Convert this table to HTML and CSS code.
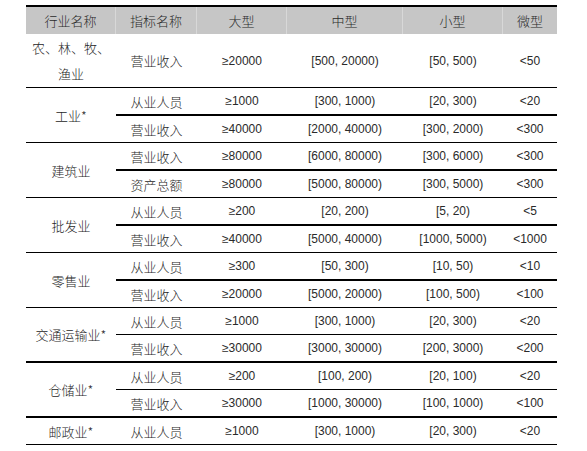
FILE: index.html
```html
<!DOCTYPE html>
<html lang="zh-CN">
<head>
<meta charset="utf-8">
<title>统计上大中小微型企业划分标准</title>
<link rel="stylesheet" href="styles.css">
</head>
<body>
<div class="sheet">
  <div class="head">
    <div class="hc">行业名称</div>
    <div class="hc">指标名称</div>
    <div class="hc">大型</div>
    <div class="hc">中型</div>
    <div class="hc">小型</div>
    <div class="hc last">微型</div>
  </div>

  <div class="group tall">
    <div class="industry">农、林、牧、<br>渔业</div>
    <div class="metrics">
      <div class="row fill"><div class="c cn">营业收入</div><div class="c num">≥20000</div><div class="c num">[500, 20000)</div><div class="c num">[50, 500)</div><div class="c num">&lt;50</div></div>
    </div>
  </div>

  <div class="group">
    <div class="industry">工业*</div>
    <div class="metrics">
      <div class="row thick"><div class="c cn">从业人员</div><div class="c num">≥1000</div><div class="c num">[300, 1000)</div><div class="c num">[20, 300)</div><div class="c num">&lt;20</div></div>
      <div class="row"><div class="c cn">营业收入</div><div class="c num">≥40000</div><div class="c num">[2000, 40000)</div><div class="c num">[300, 2000)</div><div class="c num">&lt;300</div></div>
    </div>
  </div>

  <div class="group">
    <div class="industry">建筑业</div>
    <div class="metrics">
      <div class="row thick"><div class="c cn">营业收入</div><div class="c num">≥80000</div><div class="c num">[6000, 80000)</div><div class="c num">[300, 6000)</div><div class="c num">&lt;300</div></div>
      <div class="row"><div class="c cn">资产总额</div><div class="c num">≥80000</div><div class="c num">[5000, 80000)</div><div class="c num">[300, 5000)</div><div class="c num">&lt;300</div></div>
    </div>
  </div>

  <div class="group">
    <div class="industry">批发业</div>
    <div class="metrics">
      <div class="row thick"><div class="c cn">从业人员</div><div class="c num">≥200</div><div class="c num">[20, 200)</div><div class="c num">[5, 20)</div><div class="c num">&lt;5</div></div>
      <div class="row"><div class="c cn">营业收入</div><div class="c num">≥40000</div><div class="c num">[5000, 40000)</div><div class="c num">[1000, 5000)</div><div class="c num">&lt;1000</div></div>
    </div>
  </div>

  <div class="group">
    <div class="industry">零售业</div>
    <div class="metrics">
      <div class="row thick"><div class="c cn">从业人员</div><div class="c num">≥300</div><div class="c num">[50, 300)</div><div class="c num">[10, 50)</div><div class="c num">&lt;10</div></div>
      <div class="row"><div class="c cn">营业收入</div><div class="c num">≥20000</div><div class="c num">[5000, 20000)</div><div class="c num">[100, 500)</div><div class="c num">&lt;100</div></div>
    </div>
  </div>

  <div class="group heavy">
    <div class="industry">交通运输业*</div>
    <div class="metrics">
      <div class="row"><div class="c cn">从业人员</div><div class="c num">≥1000</div><div class="c num">[300, 1000)</div><div class="c num">[20, 300)</div><div class="c num">&lt;20</div></div>
      <div class="row"><div class="c cn">营业收入</div><div class="c num">≥30000</div><div class="c num">[3000, 30000)</div><div class="c num">[200, 3000)</div><div class="c num">&lt;200</div></div>
    </div>
  </div>

  <div class="group heavy">
    <div class="industry">仓储业*</div>
    <div class="metrics">
      <div class="row"><div class="c cn">从业人员</div><div class="c num">≥200</div><div class="c num">[100, 200)</div><div class="c num">[20, 100)</div><div class="c num">&lt;20</div></div>
      <div class="row"><div class="c cn">营业收入</div><div class="c num">≥30000</div><div class="c num">[1000, 30000)</div><div class="c num">[100, 1000)</div><div class="c num">&lt;100</div></div>
    </div>
  </div>

  <div class="group">
    <div class="industry">邮政业*</div>
    <div class="metrics">
      <div class="row"><div class="c cn">从业人员</div><div class="c num">≥1000</div><div class="c num">[300, 1000)</div><div class="c num">[20, 300)</div><div class="c num">&lt;20</div></div>
    </div>
  </div>
</div>
</body>
</html>
```

FILE: styles.css
```css
* {
  box-sizing: border-box;
}

body {
  margin: 0;
  background: #ffffff;
  color: #262626;
  font-family: "Noto Sans CJK SC", sans-serif;
  font-size: 13px;
  font-weight: 300;
}

.sheet {
  margin: 5px 0 0 26px;
  width: 531px;
  border-top: 2px solid #000000;
}

.head {
  display: grid;
  grid-template-columns: 90px 81px 90px 116px 100px 54px;
  height: 27px;
  background: #c6c6c6;
}

.hc {
  display: flex;
  align-items: center;
  justify-content: center;
  border-right: 1px solid #d8d8d8;
  color: #2a2a2a;
}

.hc.last {
  border-right: none;
}

.group {
  display: grid;
  grid-template-columns: 90px 441px;
  border-bottom: 1px solid #000000;
}

.group.heavy {
  border-bottom: 2px solid #000000;
}

.industry {
  display: flex;
  align-items: center;
  justify-content: center;
  text-align: center;
}

.group.tall .industry {
  line-height: 26px;
}

.metrics {
  display: flex;
  flex-direction: column;
}

.row {
  display: grid;
  grid-template-columns: 81px 90px 116px 100px 54px;
  height: 26px;
}

.row.fill {
  height: 53px;
}

.row.thick {
  height: 28px;
  border-bottom: 2px solid #000000;
}

.group.heavy .row:first-child {
  height: 27px;
  border-bottom: 1px solid #000000;
}

.c {
  display: flex;
  align-items: center;
  justify-content: center;
  white-space: nowrap;
}

.num {
  font-family: "Liberation Sans", "Noto Sans CJK SC", sans-serif;
  font-size: 12px;
  font-weight: 400;
  color: #2a2a2a;
}
```
